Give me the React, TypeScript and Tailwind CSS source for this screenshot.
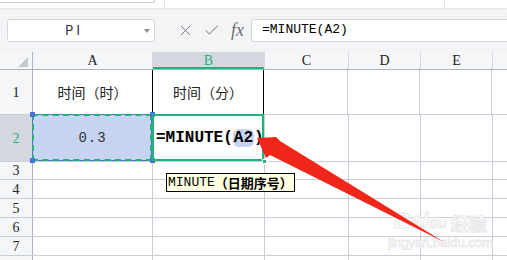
import React from "react";
import { X, Check } from "lucide-react";

const cols = [
  { key: "A", w: "w-[120px]" },
  { key: "B", w: "w-[112px]" },
  { key: "C", w: "w-[84px]" },
  { key: "D", w: "w-[72px]" },
  { key: "E", w: "w-[72px]" },
  { key: "F", w: "w-[40px]" },
];

const rows = [
  { n: 1, h: "h-[45px]" },
  { n: 2, h: "h-[47px]" },
  { n: 3, h: "h-[18px]" },
  { n: 4, h: "h-[19px]" },
  { n: 5, h: "h-[19px]" },
  { n: 6, h: "h-[19px]" },
  { n: 7, h: "h-[19px]" },
  { n: 8, h: "h-[19px]" },
];

const serif = "font-['Liberation_Serif','Noto_Sans_CJK_SC',serif]";
const cjk = "font-['Noto_Sans_CJK_SC',sans-serif]";
const mono = "font-['Liberation_Mono','Noto_Sans_CJK_SC',monospace]";

function Cell({ row, col }: { row: number; col: string }) {
  const width = cols.find((c) => c.key === col)!.w;

  if (row === 1 && (col === "A" || col === "B")) {
    return (
      <div
        className={`${width} shrink-0 flex items-center justify-center border-r border-[#c9cdd9] text-[14px] text-[#222] ${cjk} ${
          col === "B" ? "border-l border-l-black border-r-black -ml-px" : ""
        }`}
      >
        {col === "A" ? "时间（时）" : "时间（分）"}
      </div>
    );
  }

  if (row === 2 && col === "A") {
    return (
      <div className={`${width} shrink-0 relative flex items-center justify-center bg-[#c6d4f1] border-r border-[#c9cdd9]`}>
        <span className={`${mono} text-[14px] text-[#333] tracking-[1px]`}>0.3</span>
        <div className="absolute -top-px -left-px right-0 bottom-0 border border-[#4a72d4]" />
        <div className="absolute -top-px -left-px right-0 bottom-0 border-2 border-dashed border-[#1fb37a]" />
        <div className="absolute -top-[3px] -left-[3px] w-[5px] h-[5px] bg-[#4a72d4]" />
        <div className="absolute -top-[3px] -right-[3px] w-[5px] h-[5px] bg-[#4a72d4]" />
        <div className="absolute -bottom-[2px] -left-[3px] w-[5px] h-[5px] bg-[#4a72d4]" />
        <div className="absolute -bottom-[2px] -right-[3px] w-[5px] h-[5px] bg-[#4a72d4]" />
      </div>
    );
  }

  if (row === 2 && col === "B") {
    return (
      <div className={`${width} shrink-0 relative flex items-center pl-[3px] border-r border-[#c9cdd9] overflow-visible`}>
        <span className={`${mono} font-bold text-[16px] text-black whitespace-nowrap`}>
          =MINUTE(<span className="bg-[#c6d4f1] rounded-[6px] px-px">A2</span>)
        </span>
        <div className="absolute -top-px -left-px right-0 bottom-0 border-2 border-[#1fb37a]" />
        <div className="absolute -bottom-[3px] -right-[3px] w-[5px] h-[5px] bg-[#1fb37a] border border-white" />
      </div>
    );
  }

  return <div className={`${width} shrink-0 border-r border-[#c9cdd9]`} />;
}

export default function App() {
  return (
    <div className="relative w-[507px] h-[260px] overflow-hidden bg-white">
      {/* top strip */}
      <div className="relative h-[8px] bg-white shadow-[0_1px_2px_rgba(0,0,0,0.08)] flex">
        <div className="w-[155px] shrink-0 h-[3px] border-r border-b border-[#c9ccd2]" />
        <div className="w-[10px] shrink-0 border-r border-[#e3e5e8]" />
        <div className="w-[280px] shrink-0 border-r border-[#e3e5e8]" />
      </div>

      {/* toolbar */}
      <div className="h-[44px] bg-[#f3f4f6] flex items-center pl-[7px]">
        <div className="w-[148px] shrink-0 h-[23px] bg-white border border-[#d3d6dc] rounded-[3px] flex items-center relative">
          <span className={`flex-1 text-center pr-[14px] text-[13px] tracking-[3px] text-[#2a2a3a] ${cjk}`}>PI</span>
          <span className="absolute right-[4px] top-[9px] w-0 h-0 border-l-[3px] border-r-[3px] border-t-[4px] border-l-transparent border-r-transparent border-t-[#8a8d93]" />
        </div>
        <div className="flex items-center text-[#6b6e73] ml-[22px] gap-[9px]">
          <X size={17} strokeWidth={1.3} />
          <Check size={17} strokeWidth={1.4} />
          <span className={`${serif} italic text-[18px] leading-none ml-[2px]`}>fx</span>
        </div>
        <div className="ml-[7px] flex-1 h-[23px] bg-white border border-[#d3d6dc] rounded-l-[3px] border-r-0 flex items-center pl-[10px]">
          <span className={`${mono} text-[13px] text-black`}>=MINUTE(A2)</span>
        </div>
      </div>

      {/* column header */}
      <div className="flex h-[18px] bg-[#f5f6f8] border-b border-[#adb3c6]">
        <div className="w-[33px] shrink-0 relative border-r border-[#adb3c6]">
          <div className="absolute right-[4px] bottom-[2px] w-0 h-0 border-b-[10px] border-l-[10px] border-b-[#c5c8ce] border-l-transparent" />
        </div>
        {cols.map((c) => (
          <div
            key={c.key}
            className={`${c.w} shrink-0 flex items-center justify-center border-r border-[#d6d9e1] text-[14px] ${serif} ${
              c.key === "B"
                ? "bg-[#d4d7dd] text-[#1fb37a] shadow-[inset_0_-2px_0_#1fb37a]"
                : "text-[#222]"
            }`}
          >
            {c.key === "F" ? "" : c.key}
          </div>
        ))}
      </div>

      {/* rows */}
      {rows.map((r) => (
        <div key={r.n} className={`flex ${r.h} border-b border-[#c9cdd9]`}>
          <div
            className={`w-[33px] shrink-0 flex items-center justify-center border-r border-[#adb3c6] text-[14px] ${serif} ${
              r.n === 2 ? "bg-[#d4d7dd] text-[#1fb37a]" : "bg-[#f5f6f8] text-[#222]"
            }`}
          >
            {r.n < 8 ? r.n : ""}
          </div>
          {cols.map((c) => (
            <Cell key={c.key} row={r.n} col={c.key} />
          ))}
        </div>
      ))}

      {/* tooltip */}
      <div className="absolute left-[166px] top-[173px] h-[19px] px-px bg-[#ffffe1] border border-black flex items-center whitespace-nowrap">
        <span className={`${mono} text-[13px] text-black`}>MINUTE</span>
        <span className={`${cjk} font-bold text-[13px] text-black`}>（日期序号）</span>
      </div>

      {/* watermark */}
      <div className="absolute left-[388px] top-[210px] flex flex-col items-center pointer-events-none">
        <div className="flex items-end gap-[4px]">
          <span className="font-['Liberation_Sans',sans-serif] font-bold italic text-[22px] leading-none text-white [-webkit-text-stroke:1px_#e6e6e6]">
            Bai<span className="text-[15px]">du</span>
          </span>
          <span className={`${cjk} font-bold text-[18px] leading-none text-white [-webkit-text-stroke:1px_#e6e6e6]`}>经验</span>
        </div>
        <span className="font-['Liberation_Sans',sans-serif] text-[13px] leading-none mt-[4px] text-white [-webkit-text-stroke:0.8px_#e8e8e8]">
          jingyan.baidu.com
        </span>
      </div>

      {/* red arrow */}
      <svg className="absolute inset-0 pointer-events-none" width="507" height="260" viewBox="0 0 507 260">
        <polygon
          points="257,138 276,137 280,141 444,242 270,155 266,158"
          fill="#f0261b"
        />
      </svg>
    </div>
  );
}
